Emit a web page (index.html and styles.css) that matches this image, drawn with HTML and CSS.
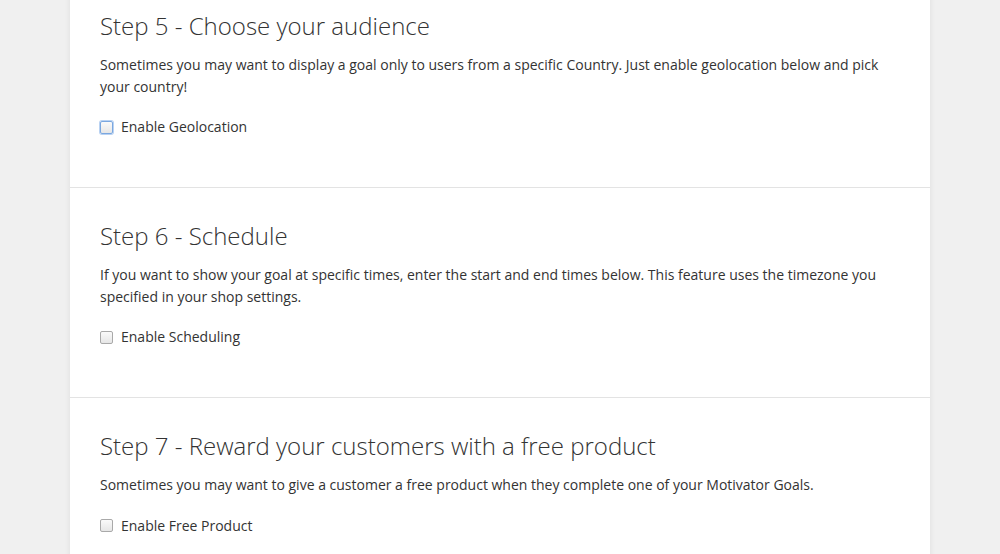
FILE: index.html
```html
<!DOCTYPE html>
<html>
<head>
<meta charset="utf-8">
<link rel="stylesheet" href="styles.css">
</head>
<body>
<div class="panel">
  <section class="step">
    <h2 class="step-title">Step 5 - Choose your audience</h2>
    <p class="step-text">Sometimes you may want to display a goal only to users from a specific Country. Just enable geolocation below and pick your country!</p>
    <label class="check"><span class="box focused"></span>Enable Geolocation</label>
  </section>
  <section class="step">
    <h2 class="step-title">Step 6 - Schedule</h2>
    <p class="step-text">If you want to show your goal at specific times, enter the start and end times below. This feature uses the timezone you specified in your shop settings.</p>
    <label class="check"><span class="box"></span>Enable Scheduling</label>
  </section>
  <section class="step">
    <h2 class="step-title">Step 7 - Reward your customers with a free product</h2>
    <p class="step-text">Sometimes you may want to give a customer a free product when they complete one of your Motivator Goals.</p>
    <label class="check"><span class="box"></span>Enable Free Product</label>
  </section>
</div>
</body>
</html>
```
FILE: styles.css
```css
html, body {
  margin: 0;
  padding: 0;
  background: #f0f0f0;
  height: 100%;
  overflow: hidden;
}
body {
  font-family: "Open Sans", "Liberation Sans", sans-serif;
  color: #333;
}
.panel {
  width: 860px;
  margin: -22px auto 0;
  background: #fff;
  box-shadow: 0 0 6px rgba(0,0,0,0.08);
}
.step {
  padding: 30px 30px 49px;
  border-bottom: 1px solid #e3e3e3;
}
.step-title {
  margin: 0;
  font-size: 24px;
  font-weight: 300;
  line-height: 36px;
  color: #333;
}
.step-text {
  margin: 10px 0 0;
  font-size: 14px;
  line-height: 21.5px;
}
.check {
  display: flex;
  align-items: center;
  gap: 8px;
  margin-top: 19px;
  font-size: 14px;
  line-height: 22px;
}
.box {
  width: 11px;
  height: 11px;
  border: 1px solid #a9a9a9;
  border-radius: 2px;
  background: linear-gradient(#fafafa, #e6e6e6);
}
.box.focused {
  border-color: #7aa7e0;
  box-shadow: 0 0 0 1px #b9d2f2;
}
```
